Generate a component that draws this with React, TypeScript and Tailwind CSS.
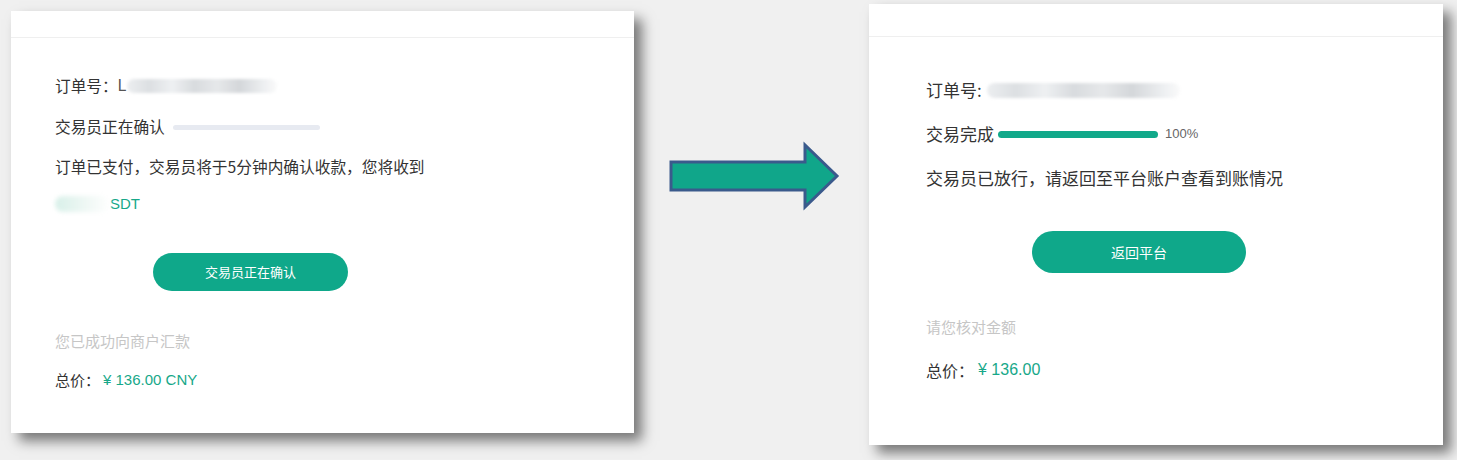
const cjk = "font-['Microsoft_YaHei','Noto_Sans_CJK_SC','Liberation_Sans',sans-serif]";

function Blurred({ className }: { className: string }) {
  return (
    <span
      className={`inline-block h-[14px] rounded-full blur-[1.5px] bg-[linear-gradient(90deg,#eceef0_0%,#dcdfe2_15%,#eef0f2_30%,#d8dbde_45%,#e6e8ea_60%,#d4d7da_75%,#eef0f2_92%,#fafafa_100%)] ${className}`}
    />
  );
}

function PendingCard() {
  return (
    <div className="mt-[11px] ml-[11px] flex h-[422px] w-[623px] shrink-0 flex-col bg-white shadow-[8px_8px_12px_rgba(0,0,0,0.5)]">
      <div className="h-[27px] border-b border-[#efefef]" />
      <div className="flex flex-col pl-[44px] pt-[38px] text-[15.7px] text-[#333]">
        <div className="flex h-5 items-center">
          <span>订单号：</span>
          <span className="font-['Liberation_Sans',sans-serif] text-[#555]">L</span>
          <Blurred className="ml-[1px] w-[150px]" />
        </div>
        <div className="mt-[21px] flex h-5 items-center">
          <span>交易员正在确认</span>
          <span className="ml-[8px] h-[5px] w-[147px] rounded-full bg-[#e7eaf1]" />
        </div>
        <div className="mt-[20px] flex h-5 items-center">
          订单已支付，交易员将于5分钟内确认收款，您将收到
        </div>
        <div className="mt-[17px] flex h-5 items-center">
          <span className="inline-block h-[16px] w-[55px] rounded-full bg-[linear-gradient(90deg,#d8f0e9,#f0f8f5_60%,#fff)] blur-[2px]" />
          <span className="font-['Liberation_Sans',sans-serif] text-[15px] text-[#17a889]">SDT</span>
        </div>
        <div className="mt-[39px] ml-[98px] flex h-[38px] w-[195px] items-center justify-center rounded-full bg-[#0fa88a] text-[13px] text-white">
          交易员正在确认
        </div>
        <div className="mt-[40px] flex h-5 items-center text-[15px] text-[#c6c6c6]">
          您已成功向商户汇款
        </div>
        <div className="mt-[19px] flex h-5 items-center text-[15px]">
          <span>总价：</span>
          <span className="ml-[3px] font-['Liberation_Sans',sans-serif] text-[#17a889]">¥ 136.00 CNY</span>
        </div>
      </div>
    </div>
  );
}

function DoneCard() {
  return (
    <div className="mt-[4px] flex h-[441px] w-[574px] shrink-0 flex-col bg-white shadow-[8px_8px_12px_rgba(0,0,0,0.5)]">
      <div className="h-[33px] border-b border-[#efefef]" />
      <div className="flex flex-col pl-[57px] pt-[42px] text-[17px] text-[#333]">
        <div className="flex h-[22px] items-center">
          <span>订单号:</span>
          <Blurred className="ml-[5px] h-[15px] w-[193px]" />
        </div>
        <div className="mt-[22px] flex h-[22px] items-center">
          <span>交易完成</span>
          <span className="ml-[4px] h-[7px] w-[160px] rounded-full bg-[#11a98a]" />
          <span className="ml-[7px] font-['Liberation_Sans',sans-serif] text-[13px] text-[#666]">100%</span>
        </div>
        <div className="mt-[22px] flex h-[22px] items-center">
          交易员已放行，请返回至平台账户查看到账情况
        </div>
        <div className="mt-[42px] ml-[106px] flex h-[42px] w-[214px] items-center justify-center rounded-full bg-[#0fa88a] text-[14px] text-white">
          返回平台
        </div>
        <div className="mt-[43px] flex h-[22px] items-center text-[15px] text-[#c6c6c6]">
          请您核对金额
        </div>
        <div className="mt-[21px] flex h-[22px] items-center text-[16px]">
          <span>总价：</span>
          <span className="ml-[4px] font-['Liberation_Sans',sans-serif] text-[#17a889]">¥ 136.00</span>
        </div>
      </div>
    </div>
  );
}

function Arrow() {
  return (
    <svg width="174" height="70" viewBox="0 0 174 70" className="mt-[141px] ml-[34px] shrink-0">
      <polygon
        points="3,21 137,21 137,4 169,35 137,66 137,49 3,49"
        fill="#10a68a"
        stroke="#3a5a8c"
        strokeWidth="3"
        strokeLinejoin="miter"
      />
    </svg>
  );
}

export default function App() {
  return (
    <div className={`flex h-[460px] w-[1457px] items-start overflow-hidden bg-[#f0f0f0] ${cjk}`}>
      <PendingCard />
      <Arrow />
      <div className="ml-[27px]">
        <DoneCard />
      </div>
    </div>
  );
}
